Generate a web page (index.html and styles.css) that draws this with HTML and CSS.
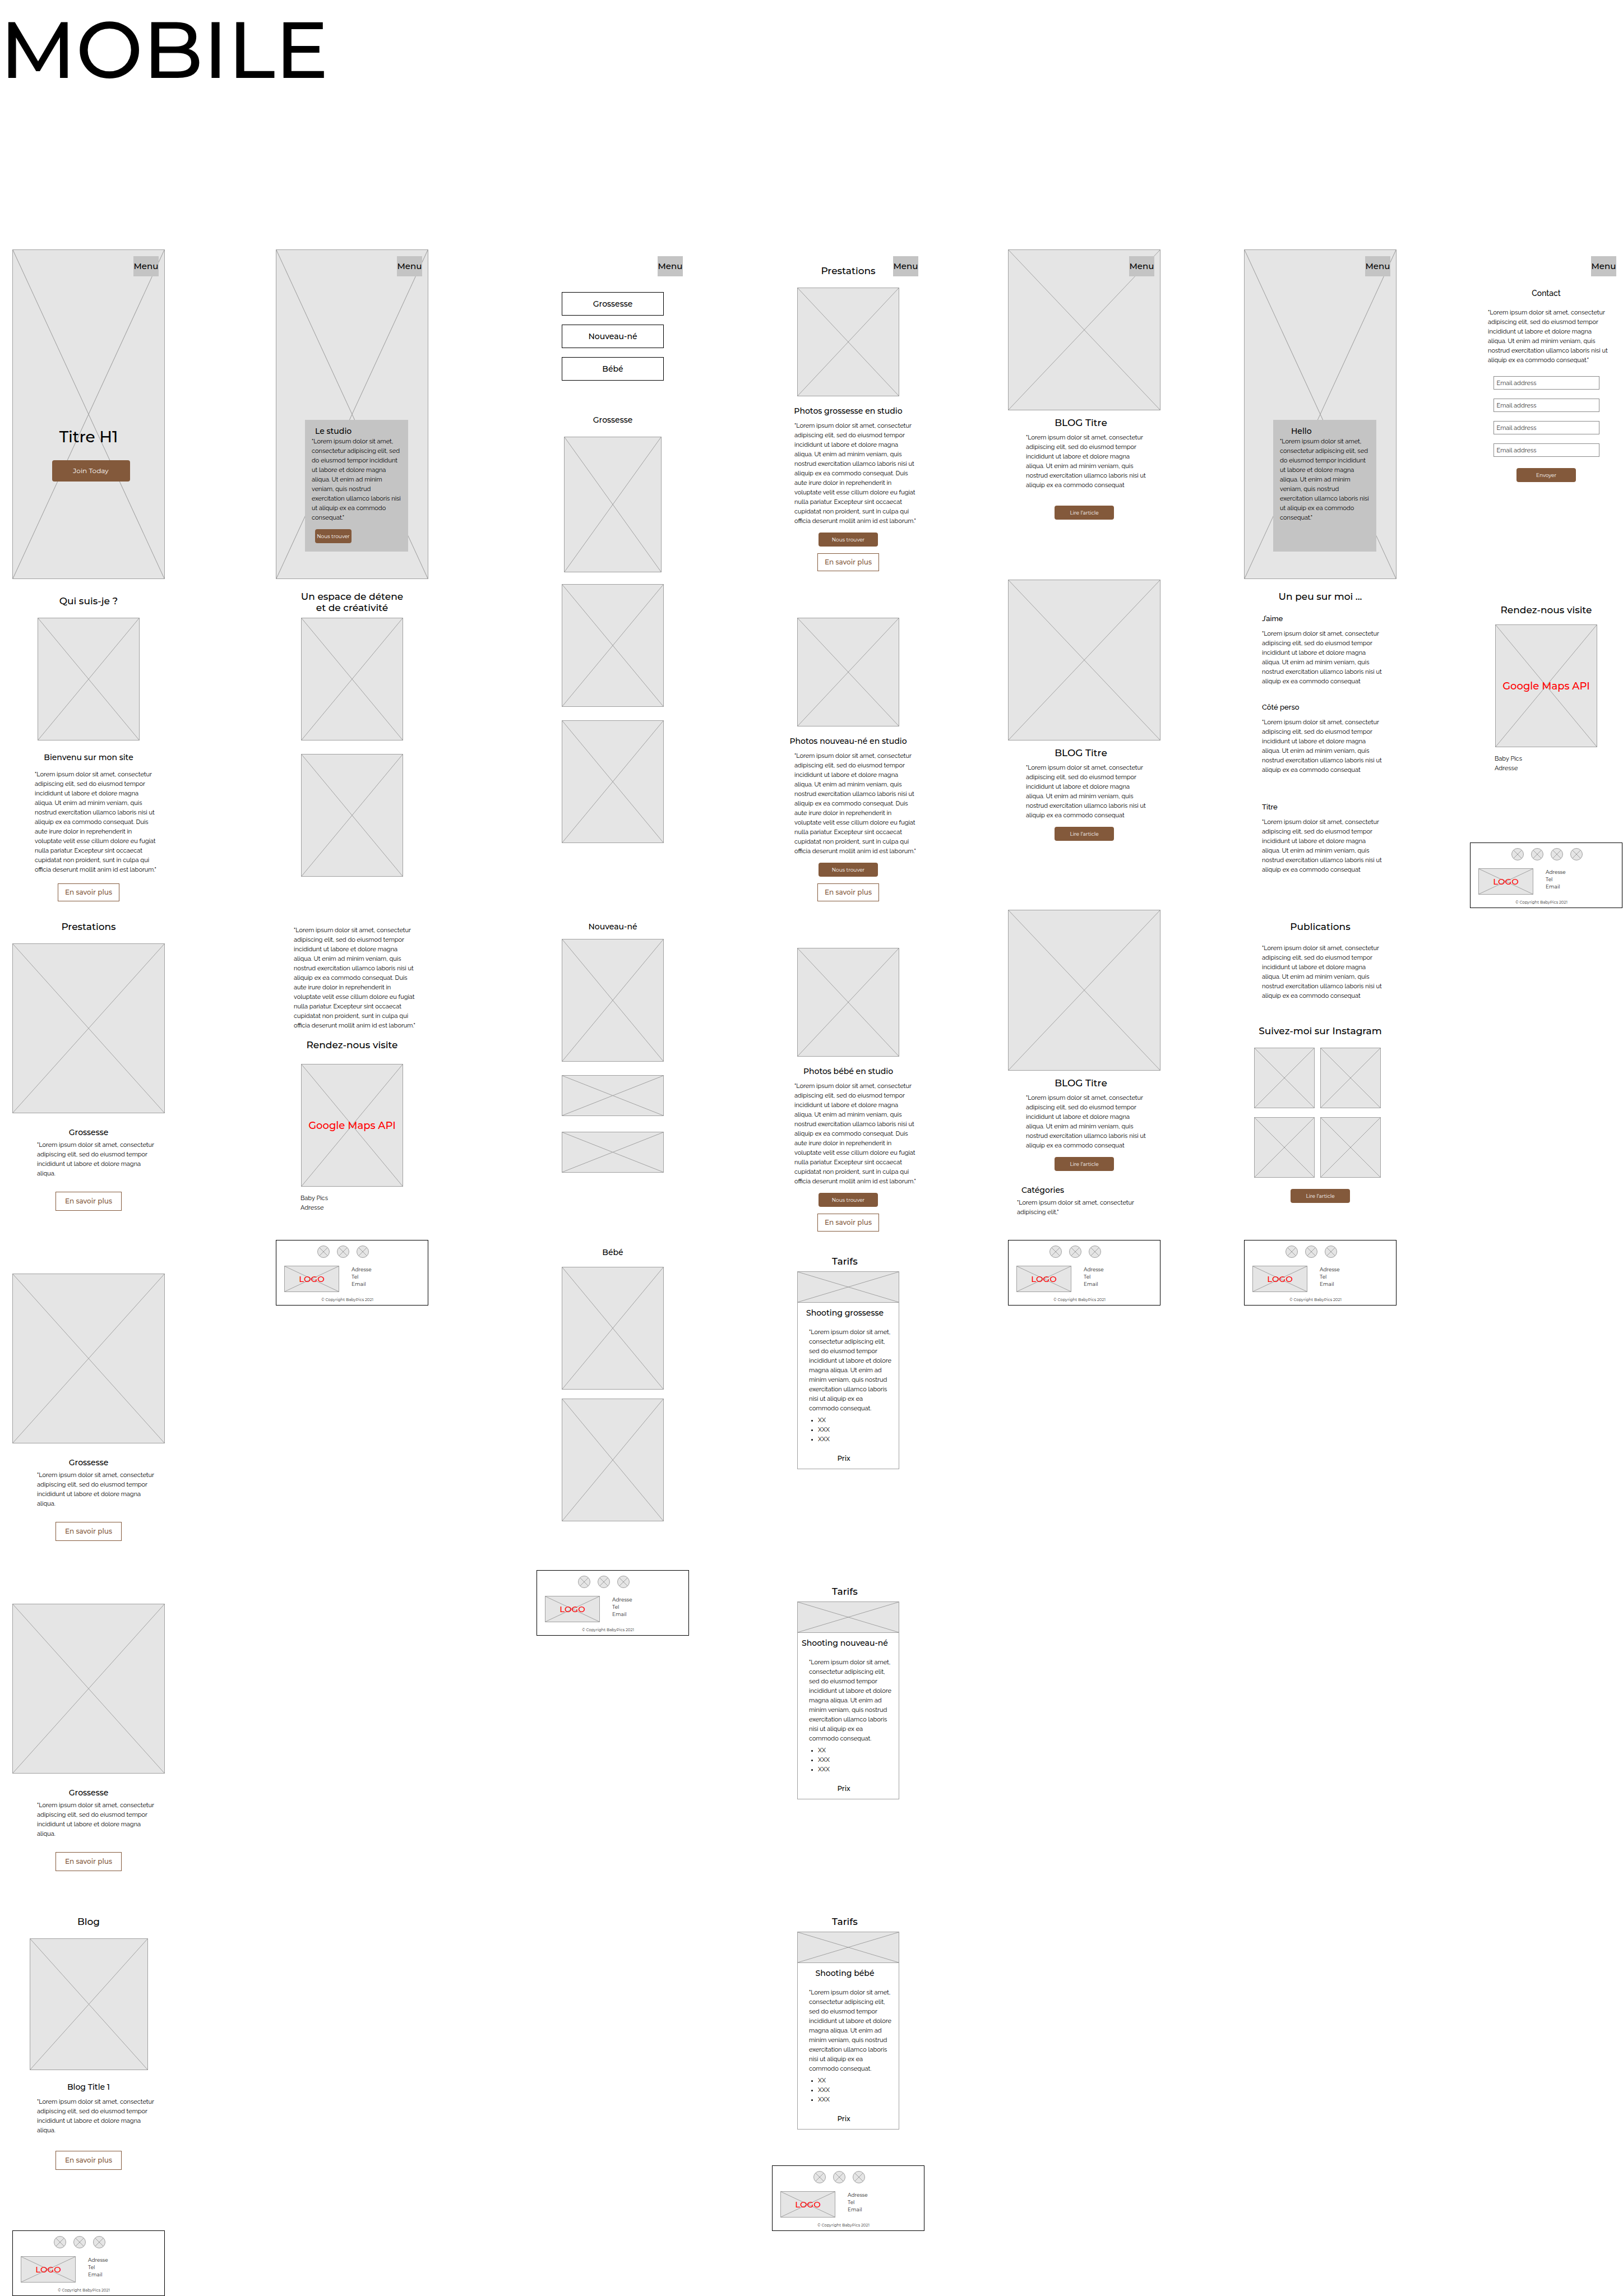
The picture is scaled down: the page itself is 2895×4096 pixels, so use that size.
FILE: index.html
```html
<!DOCTYPE html>
<html lang="fr">
<head>
<meta charset="utf-8">
<meta name="viewport" content="width=device-width, initial-scale=1">
<title>Baby Pics – Wireframes mobile</title>
<link rel="stylesheet" href="styles.css">
</head>
<body>
<svg width="0" height="0" class="defs" aria-hidden="true">
<symbol id="cross" viewBox="0 0 100 100" preserveAspectRatio="none"><path d="M0 0L100 100M100 0L0 100" vector-effect="non-scaling-stroke"/></symbol>
</svg>

<header class="board-header">
<h1 class="board-title">MOBILE</h1>
</header>

<main class="board">

<!-- Accueil -->
<article class="phone">
<button class="menu" type="button">Menu</button>
<section class="screen">
<div class="hero">
<svg class="ph"><use href="#cross"/></svg>
<div class="hero-body">
<h2 class="hero-title">Titre H1</h2>
<button class="btn btn-join mt-24" type="button">Join Today</button>
</div>
</div>
</section>
<section class="screen pt-28">
<h2>Qui suis-je ?</h2>
<svg class="ph ph-portrait mt-20"><use href="#cross"/></svg>
<h3 class="mt-20">Bienvenu sur mon site</h3>
<p class="text in-40 mt-12">"Lorem ipsum dolor sit amet, consectetur
adipiscing elit, sed do eiusmod tempor
incididunt ut labore et dolore magna
aliqua. Ut enim ad minim veniam, quis
nostrud exercitation ullamco laboris nisi ut
aliquip ex ea commodo consequat. Duis
aute irure dolor in reprehenderit in
voluptate velit esse cillum dolore eu fugiat
nulla pariatur. Excepteur sint occaecat
cupidatat non proident, sunt in culpa qui
officia deserunt mollit anim id est laborum."</p>
<button class="btn-line mt-16" type="button">En savoir plus</button>
</section>
<section class="screen pt-20">
<h2>Prestations</h2>
<svg class="ph ph-service mt-20"><use href="#cross"/></svg>
<h3 class="mt-24">Grossesse</h3>
<p class="text in-44 mt-4">"Lorem ipsum dolor sit amet, consectetur
adipiscing elit, sed do eiusmod tempor
incididunt ut labore et dolore magna
aliqua.</p>
<button class="btn-line btn-line-wide mt-24" type="button">En savoir plus</button>
</section>
<section class="screen pt-60">
<svg class="ph ph-service"><use href="#cross"/></svg>
<h3 class="mt-24">Grossesse</h3>
<p class="text in-44 mt-4">"Lorem ipsum dolor sit amet, consectetur
adipiscing elit, sed do eiusmod tempor
incididunt ut labore et dolore magna
aliqua.</p>
<button class="btn-line btn-line-wide mt-24" type="button">En savoir plus</button>
</section>
<section class="screen pt-60">
<svg class="ph ph-service"><use href="#cross"/></svg>
<h3 class="mt-24">Grossesse</h3>
<p class="text in-44 mt-4">"Lorem ipsum dolor sit amet, consectetur
adipiscing elit, sed do eiusmod tempor
incididunt ut labore et dolore magna
aliqua.</p>
<button class="btn-line btn-line-wide mt-24" type="button">En savoir plus</button>
</section>
<section class="screen pt-28">
<h2>Blog</h2>
<svg class="ph ph-blog mt-20"><use href="#cross"/></svg>
<h3 class="mt-20">Blog Title 1</h3>
<p class="text in-44 mt-8">"Lorem ipsum dolor sit amet, consectetur
adipiscing elit, sed do eiusmod tempor
incididunt ut labore et dolore magna
aliqua.</p>
<button class="btn-line btn-line-wide mt-28" type="button">En savoir plus</button>
</section>
<footer class="footer">
<div class="social"><svg class="ph"><use href="#cross"/></svg><svg class="ph"><use href="#cross"/></svg><svg class="ph"><use href="#cross"/></svg></div>
<div class="footer-row">
<div class="logo"><svg class="ph"><use href="#cross"/></svg><span>LOGO</span></div>
<address>Adresse<br>Tel<br>Email</address>
</div>
<small>© Copyright BabyPics 2021</small>
</footer>
</article>

<!-- Le studio -->
<article class="phone">
<button class="menu" type="button">Menu</button>
<section class="screen">
<div class="hero">
<svg class="ph"><use href="#cross"/></svg>
<div class="hero-card">
<h3 class="card-title">Le studio</h3>
<p class="text">"Lorem ipsum dolor sit amet,
consectetur adipiscing elit, sed
do eiusmod tempor incididunt
ut labore et dolore magna
aliqua. Ut enim ad minim
veniam, quis nostrud
exercitation ullamco laboris nisi
ut aliquip ex ea commodo
consequat."</p>
<button class="btn btn-compact mt-12" type="button">Nous trouver</button>
</div>
</div>
</section>
<section class="screen pt-20">
<h2>Un espace de détene<br>et de créativité</h2>
<svg class="ph ph-portrait mt-8"><use href="#cross"/></svg>
<svg class="ph ph-portrait mt-24"><use href="#cross"/></svg>
</section>
<section class="screen pt-28">
<p class="text in-32">"Lorem ipsum dolor sit amet, consectetur
adipiscing elit, sed do eiusmod tempor
incididunt ut labore et dolore magna
aliqua. Ut enim ad minim veniam, quis
nostrud exercitation ullamco laboris nisi ut
aliquip ex ea commodo consequat. Duis
aute irure dolor in reprehenderit in
voluptate velit esse cillum dolore eu fugiat
nulla pariatur. Excepteur sint occaecat
cupidatat non proident, sunt in culpa qui
officia deserunt mollit anim id est laborum."</p>
<h2 class="mt-16">Rendez-nous visite</h2>
<div class="map mt-24"><svg class="ph"><use href="#cross"/></svg><span>Google Maps API</span></div>
<p class="text in-44 mt-12">Baby Pics
Adresse</p>
</section>
<footer class="footer">
<div class="social"><svg class="ph"><use href="#cross"/></svg><svg class="ph"><use href="#cross"/></svg><svg class="ph"><use href="#cross"/></svg></div>
<div class="footer-row">
<div class="logo"><svg class="ph"><use href="#cross"/></svg><span>LOGO</span></div>
<address>Adresse<br>Tel<br>Email</address>
</div>
<small>© Copyright BabyPics 2021</small>
</footer>
</article>

<!-- Galerie -->
<article class="phone">
<button class="menu" type="button">Menu</button>
<section class="screen pt-76">
<nav class="filters">
<a href="#grossesse">Grossesse</a>
<a href="#nouveau-ne">Nouveau-né</a>
<a href="#bebe">Bébé</a>
</nav>
<h3 class="mt-60" id="grossesse">Grossesse</h3>
<svg class="ph ph-cover mt-20"><use href="#cross"/></svg>
</section>
<section class="screen pt-8">
<svg class="ph ph-portrait"><use href="#cross"/></svg>
<svg class="ph ph-portrait mt-24"><use href="#cross"/></svg>
</section>
<section class="screen pt-20">
<h3 id="nouveau-ne">Nouveau-né</h3>
<svg class="ph ph-portrait mt-12"><use href="#cross"/></svg>
<svg class="ph ph-strip mt-24"><use href="#cross"/></svg>
<svg class="ph ph-strip mt-28"><use href="#cross"/></svg>
</section>
<section class="screen pt-12">
<h3 id="bebe">Bébé</h3>
<svg class="ph ph-portrait mt-16"><use href="#cross"/></svg>
<svg class="ph ph-portrait mt-16"><use href="#cross"/></svg>
</section>
<footer class="footer">
<div class="social"><svg class="ph"><use href="#cross"/></svg><svg class="ph"><use href="#cross"/></svg><svg class="ph"><use href="#cross"/></svg></div>
<div class="footer-row">
<div class="logo"><svg class="ph"><use href="#cross"/></svg><span>LOGO</span></div>
<address>Adresse<br>Tel<br>Email</address>
</div>
<small>© Copyright BabyPics 2021</small>
</footer>
</article>

<!-- Prestations -->
<article class="phone">
<button class="menu" type="button">Menu</button>
<section class="screen pt-28">
<h2>Prestations</h2>
<svg class="ph ph-session mt-20"><use href="#cross"/></svg>
<h3 class="mt-16">Photos grossesse en studio</h3>
<p class="text in-40 mt-8">"Lorem ipsum dolor sit amet, consectetur
adipiscing elit, sed do eiusmod tempor
incididunt ut labore et dolore magna
aliqua. Ut enim ad minim veniam, quis
nostrud exercitation ullamco laboris nisi ut
aliquip ex ea commodo consequat. Duis
aute irure dolor in reprehenderit in
voluptate velit esse cillum dolore eu fugiat
nulla pariatur. Excepteur sint occaecat
cupidatat non proident, sunt in culpa qui
officia deserunt mollit anim id est laborum."</p>
<button class="btn mt-12" type="button">Nous trouver</button>
<button class="btn-line mt-12" type="button">En savoir plus</button>
</section>
<section class="screen pt-68">
<svg class="ph ph-session"><use href="#cross"/></svg>
<h3 class="mt-16">Photos nouveau-né en studio</h3>
<p class="text in-40 mt-8">"Lorem ipsum dolor sit amet, consectetur
adipiscing elit, sed do eiusmod tempor
incididunt ut labore et dolore magna
aliqua. Ut enim ad minim veniam, quis
nostrud exercitation ullamco laboris nisi ut
aliquip ex ea commodo consequat. Duis
aute irure dolor in reprehenderit in
voluptate velit esse cillum dolore eu fugiat
nulla pariatur. Excepteur sint occaecat
cupidatat non proident, sunt in culpa qui
officia deserunt mollit anim id est laborum."</p>
<button class="btn mt-12" type="button">Nous trouver</button>
<button class="btn-line mt-12" type="button">En savoir plus</button>
</section>
<section class="screen pt-68">
<svg class="ph ph-session"><use href="#cross"/></svg>
<h3 class="mt-16">Photos bébé en studio</h3>
<p class="text in-40 mt-8">"Lorem ipsum dolor sit amet, consectetur
adipiscing elit, sed do eiusmod tempor
incididunt ut labore et dolore magna
aliqua. Ut enim ad minim veniam, quis
nostrud exercitation ullamco laboris nisi ut
aliquip ex ea commodo consequat. Duis
aute irure dolor in reprehenderit in
voluptate velit esse cillum dolore eu fugiat
nulla pariatur. Excepteur sint occaecat
cupidatat non proident, sunt in culpa qui
officia deserunt mollit anim id est laborum."</p>
<button class="btn mt-12" type="button">Nous trouver</button>
<button class="btn-line mt-12" type="button">En savoir plus</button>
</section>
<section class="screen pt-28">
<h2 class="lean-left">Tarifs</h2>
<div class="price mt-8">
<svg class="ph"><use href="#cross"/></svg>
<h3 class="lean-left mt-8">Shooting grossesse</h3>
<p class="text mt-16">"Lorem ipsum dolor sit amet,
consectetur adipiscing elit,
sed do eiusmod tempor
incididunt ut labore et dolore
magna aliqua. Ut enim ad
minim veniam, quis nostrud
exercitation ullamco laboris
nisi ut aliquip ex ea
commodo consequat.</p>
<ul><li>XX</li><li>XXX</li><li>XXX</li></ul>
<strong class="mt-16">Prix</strong>
</div>
</section>
<section class="screen pt-28">
<h2 class="lean-left">Tarifs</h2>
<div class="price mt-8">
<svg class="ph"><use href="#cross"/></svg>
<h3 class="lean-left mt-8">Shooting nouveau-né</h3>
<p class="text mt-16">"Lorem ipsum dolor sit amet,
consectetur adipiscing elit,
sed do eiusmod tempor
incididunt ut labore et dolore
magna aliqua. Ut enim ad
minim veniam, quis nostrud
exercitation ullamco laboris
nisi ut aliquip ex ea
commodo consequat.</p>
<ul><li>XX</li><li>XXX</li><li>XXX</li></ul>
<strong class="mt-16">Prix</strong>
</div>
</section>
<section class="screen screen-short pt-28">
<h2 class="lean-left">Tarifs</h2>
<div class="price mt-8">
<svg class="ph"><use href="#cross"/></svg>
<h3 class="lean-left mt-8">Shooting bébé</h3>
<p class="text mt-16">"Lorem ipsum dolor sit amet,
consectetur adipiscing elit,
sed do eiusmod tempor
incididunt ut labore et dolore
magna aliqua. Ut enim ad
minim veniam, quis nostrud
exercitation ullamco laboris
nisi ut aliquip ex ea
commodo consequat.</p>
<ul><li>XX</li><li>XXX</li><li>XXX</li></ul>
<strong class="mt-16">Prix</strong>
</div>
</section>
<footer class="footer mt-64">
<div class="social"><svg class="ph"><use href="#cross"/></svg><svg class="ph"><use href="#cross"/></svg><svg class="ph"><use href="#cross"/></svg></div>
<div class="footer-row">
<div class="logo"><svg class="ph"><use href="#cross"/></svg><span>LOGO</span></div>
<address>Adresse<br>Tel<br>Email</address>
</div>
<small>© Copyright BabyPics 2021</small>
</footer>
</article>

<!-- Blog -->
<article class="phone">
<button class="menu" type="button">Menu</button>
<section class="screen">
<svg class="ph ph-post"><use href="#cross"/></svg>
<h2 class="lean-left mt-12">BLOG Titre</h2>
<p class="text in-32 mt-8">"Lorem ipsum dolor sit amet, consectetur
adipiscing elit, sed do eiusmod tempor
incididunt ut labore et dolore magna
aliqua. Ut enim ad minim veniam, quis
nostrud exercitation ullamco laboris nisi ut
aliquip ex ea commodo consequat</p>
<button class="btn mt-28" type="button">Lire l’article</button>
</section>
<section class="screen">
<svg class="ph ph-post"><use href="#cross"/></svg>
<h2 class="lean-left mt-12">BLOG Titre</h2>
<p class="text in-32 mt-8">"Lorem ipsum dolor sit amet, consectetur
adipiscing elit, sed do eiusmod tempor
incididunt ut labore et dolore magna
aliqua. Ut enim ad minim veniam, quis
nostrud exercitation ullamco laboris nisi ut
aliquip ex ea commodo consequat</p>
<button class="btn mt-12" type="button">Lire l’article</button>
</section>
<section class="screen">
<svg class="ph ph-post"><use href="#cross"/></svg>
<h2 class="lean-left mt-12">BLOG Titre</h2>
<p class="text in-32 mt-8">"Lorem ipsum dolor sit amet, consectetur
adipiscing elit, sed do eiusmod tempor
incididunt ut labore et dolore magna
aliqua. Ut enim ad minim veniam, quis
nostrud exercitation ullamco laboris nisi ut
aliquip ex ea commodo consequat</p>
<button class="btn mt-12" type="button">Lire l’article</button>
<h3 class="start in-24 mt-24">Catégories</h3>
<p class="text in-16 mt-4">"Lorem ipsum dolor sit amet, consectetur
adipiscing elit,"</p>
</section>
<footer class="footer">
<div class="social"><svg class="ph"><use href="#cross"/></svg><svg class="ph"><use href="#cross"/></svg><svg class="ph"><use href="#cross"/></svg></div>
<div class="footer-row">
<div class="logo"><svg class="ph"><use href="#cross"/></svg><span>LOGO</span></div>
<address>Adresse<br>Tel<br>Email</address>
</div>
<small>© Copyright BabyPics 2021</small>
</footer>
</article>

<!-- À propos -->
<article class="phone">
<button class="menu" type="button">Menu</button>
<section class="screen">
<div class="hero">
<svg class="ph"><use href="#cross"/></svg>
<div class="hero-card">
<h3 class="card-title card-title-inset">Hello</h3>
<p class="text">"Lorem ipsum dolor sit amet,
consectetur adipiscing elit, sed
do eiusmod tempor incididunt
ut labore et dolore magna
aliqua. Ut enim ad minim
veniam, quis nostrud
exercitation ullamco laboris nisi
ut aliquip ex ea commodo
consequat."</p>
</div>
</div>
</section>
<section class="screen pt-20">
<h2>Un peu sur moi ...</h2>
<h4 class="in-32 mt-20">J’aime</h4>
<p class="text in-32 mt-8">"Lorem ipsum dolor sit amet, consectetur
adipiscing elit, sed do eiusmod tempor
incididunt ut labore et dolore magna
aliqua. Ut enim ad minim veniam, quis
nostrud exercitation ullamco laboris nisi ut
aliquip ex ea commodo consequat</p>
<h4 class="in-32 mt-28">Côté perso</h4>
<p class="text in-32 mt-8">"Lorem ipsum dolor sit amet, consectetur
adipiscing elit, sed do eiusmod tempor
incididunt ut labore et dolore magna
aliqua. Ut enim ad minim veniam, quis
nostrud exercitation ullamco laboris nisi ut
aliquip ex ea commodo consequat</p>
<h4 class="in-32 mt-48">Titre</h4>
<p class="text in-32 mt-8">"Lorem ipsum dolor sit amet, consectetur
adipiscing elit, sed do eiusmod tempor
incididunt ut labore et dolore magna
aliqua. Ut enim ad minim veniam, quis
nostrud exercitation ullamco laboris nisi ut
aliquip ex ea commodo consequat</p>
</section>
<section class="screen pt-20">
<h2>Publications</h2>
<p class="text in-32 mt-20">"Lorem ipsum dolor sit amet, consectetur
adipiscing elit, sed do eiusmod tempor
incididunt ut labore et dolore magna
aliqua. Ut enim ad minim veniam, quis
nostrud exercitation ullamco laboris nisi ut
aliquip ex ea commodo consequat</p>
<h2 class="mt-44">Suivez-moi sur Instagram</h2>
<div class="insta mt-20"><svg class="ph"><use href="#cross"/></svg><svg class="ph"><use href="#cross"/></svg><svg class="ph"><use href="#cross"/></svg><svg class="ph"><use href="#cross"/></svg></div>
<button class="btn mt-20" type="button">Lire l’article</button>
</section>
<footer class="footer">
<div class="social"><svg class="ph"><use href="#cross"/></svg><svg class="ph"><use href="#cross"/></svg><svg class="ph"><use href="#cross"/></svg></div>
<div class="footer-row">
<div class="logo"><svg class="ph"><use href="#cross"/></svg><span>LOGO</span></div>
<address>Adresse<br>Tel<br>Email</address>
</div>
<small>© Copyright BabyPics 2021</small>
</footer>
</article>

<!-- Contact -->
<article class="phone">
<button class="menu" type="button">Menu</button>
<section class="screen pt-68">
<h3 class="light">Contact</h3>
<p class="text in-32 mt-16">"Lorem ipsum dolor sit amet, consectetur
adipiscing elit, sed do eiusmod tempor
incididunt ut labore et dolore magna
aliqua. Ut enim ad minim veniam, quis
nostrud exercitation ullamco laboris nisi ut
aliquip ex ea commodo consequat."</p>
<form class="form mt-20">
<input type="text" placeholder="Email address" aria-label="Email address">
<input type="text" placeholder="Email address" aria-label="Email address">
<input type="text" placeholder="Email address" aria-label="Email address">
<input type="text" placeholder="Email address" aria-label="Email address">
<button class="btn mt-4" type="button">Envoyer</button>
</form>
</section>
<section class="screen screen-short pt-44">
<h2>Rendez-nous visite</h2>
<div class="map mt-16"><svg class="ph"><use href="#cross"/></svg><span>Google Maps API</span></div>
<p class="text in-44 mt-12">Baby Pics
Adresse</p>
</section>
<footer class="footer mt-124">
<div class="social"><svg class="ph"><use href="#cross"/></svg><svg class="ph"><use href="#cross"/></svg><svg class="ph"><use href="#cross"/></svg><svg class="ph"><use href="#cross"/></svg></div>
<div class="footer-row">
<div class="logo"><svg class="ph"><use href="#cross"/></svg><span>LOGO</span></div>
<address>Adresse<br>Tel<br>Email</address>
</div>
<small>© Copyright BabyPics 2021</small>
</footer>
</article>

</main>
</body>
</html>
```
FILE: styles.css
```css
:root {
  --fill: #e5e5e5;
  --stroke: #a0a0a0;
  --panel: #c4c4c4;
  --brown: #83593b;
  --red: #ff0000;
  --heading: Montserrat, Inter, sans-serif;
  --copy: Raleway, Inter, sans-serif;
}

* { box-sizing: border-box; }

body {
  margin: 0;
  background: #fff;
  color: #000;
  font-family: var(--heading);
}

h1, h2, h3, h4, p, ul, form { margin: 0; padding: 0; }

.defs { position: absolute; }

/* Board */
.board-header { padding-bottom: 267px; }

.board-title {
  font-size: 142px;
  font-weight: 500;
  line-height: 178px;
}

.board {
  display: grid;
  grid-template-columns: 470fr 465fr 420fr 421fr 421fr 403fr 273fr;
  align-items: start;
  padding-left: 22px;
}

.phone {
  position: relative;
  display: flex;
  flex-direction: column;
  width: 272px;
}

.screen {
  display: flex;
  flex-direction: column;
  align-items: center;
  min-height: 589px;
}

.screen-short { min-height: 0; }

/* Spacing */
.pt-8 { padding-top: 8px; }
.pt-12 { padding-top: 12px; }
.pt-20 { padding-top: 20px; }
.pt-28 { padding-top: 28px; }
.pt-44 { padding-top: 44px; }
.pt-60 { padding-top: 60px; }
.pt-68 { padding-top: 68px; }
.pt-76 { padding-top: 76px; }

.mt-4 { margin-top: 4px; }
.mt-8 { margin-top: 8px; }
.mt-12 { margin-top: 12px; }
.mt-16 { margin-top: 16px; }
.mt-20 { margin-top: 20px; }
.mt-24 { margin-top: 24px; }
.mt-28 { margin-top: 28px; }
.mt-44 { margin-top: 44px; }
.mt-48 { margin-top: 48px; }
.mt-60 { margin-top: 60px; }
.mt-64 { margin-top: 64px; }
.mt-124 { margin-top: 124px; }

.in-16 { margin-left: 16px; }
.in-24 { margin-left: 24px; }
.in-32 { margin-left: 32px; }
.in-40 { margin-left: 40px; }
.in-44 { margin-left: 44px; }

/* Type */
h2, h3 {
  font-weight: 500;
  line-height: 20px;
  text-align: center;
  white-space: nowrap;
}

h2 { font-size: 17px; }
h3 { font-size: 14px; }

h4 {
  align-self: flex-start;
  font: 500 13px/20px var(--copy);
}

.light { font-family: var(--copy); }
.start { align-self: flex-start; }
.lean-left { padding-right: 12px; }

.text {
  align-self: flex-start;
  font: 400 11px/17px var(--copy);
  white-space: pre;
}

/* Image placeholders */
.ph {
  display: block;
  flex: none;
  width: 100%;
  height: 100%;
  border: 1px solid var(--stroke);
  background: var(--fill);
  fill: none;
  stroke: var(--stroke);
}

.ph-portrait { width: 182px; height: 219px; }
.ph-cover { width: 174px; height: 242px; }
.ph-strip { width: 182px; height: 73px; }
.ph-session { width: 182px; height: 194px; }
.ph-blog { width: 211px; height: 235px; }
.ph-service { height: 303px; }
.ph-post { height: 287px; }

/* Buttons */
button { cursor: pointer; }

.menu {
  position: absolute;
  top: 12px;
  right: 11px;
  z-index: 1;
  width: 45px;
  height: 36px;
  padding: 0;
  border: 0;
  background: var(--panel);
  color: #000;
  font: 500 15px/20px var(--heading);
}

.btn {
  width: 106px;
  height: 25px;
  padding: 0;
  border: 0;
  border-radius: 4px;
  background: var(--brown);
  color: #fff;
  font: 400 9px/12px var(--heading);
}

.btn-join {
  width: 139px;
  height: 38px;
  margin-left: 8px;
  font-size: 12px;
  line-height: 16px;
}

.btn-compact {
  width: 65px;
  margin-left: 6px;
}

.btn-line {
  width: 110px;
  height: 32px;
  padding: 0;
  border: 1px solid var(--brown);
  background: #fff;
  color: var(--brown);
  font: 500 12px/16px var(--heading);
}

.btn-line-wide { width: 118px; height: 34px; }

/* Hero */
.hero {
  display: grid;
  width: 100%;
  height: 588px;
}

.hero > * { grid-area: 1 / 1; }

.hero-body {
  display: flex;
  flex-direction: column;
  align-items: center;
  padding-top: 316px;
}

.hero-title { font-size: 28px; line-height: 36px; }

.hero-card {
  width: 184px;
  height: 235px;
  margin: 304px 0 0 52px;
  padding: 10px 12px;
  background: var(--panel);
}

.card-title { padding-left: 6px; text-align: left; }
.card-title-inset { padding-left: 20px; }

/* Gallery filters */
.filters {
  display: grid;
  gap: 16px;
  width: 182px;
}

.filters a {
  height: 42px;
  border: 1px solid #000;
  color: #000;
  font-size: 14px;
  font-weight: 500;
  line-height: 40px;
  text-align: center;
  text-decoration: none;
}

/* Stacked label over a placeholder */
.map, .logo {
  display: grid;
  place-items: center;
  color: var(--red);
  font-weight: 500;
}

.map > *, .logo > * { grid-area: 1 / 1; }

.map {
  width: 182px;
  height: 219px;
  font-size: 18px;
}

.logo {
  width: 98px;
  height: 47px;
  font-size: 15px;
}

/* Price card */
.price {
  display: flex;
  flex-direction: column;
  width: 182px;
  padding-bottom: 8px;
  border: 1px solid var(--stroke);
  border-top: 0;
}

.price .ph {
  align-self: center;
  width: 182px;
  height: 56px;
}

.price .text, .price ul { margin-left: 20px; }

.price ul {
  margin-top: 4px;
  padding-left: 16px;
  font: 400 11px/17px var(--copy);
}

.price li::marker { font-size: 8px; }

.price strong {
  padding-right: 16px;
  font-size: 12px;
  font-weight: 500;
  line-height: 20px;
  text-align: center;
}

/* Instagram grid */
.insta {
  display: grid;
  grid-template-columns: 108px 108px;
  grid-auto-rows: 108px;
  gap: 16px 10px;
  padding-right: 10px;
}

/* Form */
.form {
  display: flex;
  flex-direction: column;
  align-items: center;
  gap: 16px;
}

.form input {
  width: 189px;
  height: 24px;
  padding: 0 5px;
  border: 1px solid #8a8a8a;
  background: #fff;
  font: 400 11px/16px var(--copy);
}

.form input::placeholder { color: #333; opacity: 1; }

/* Footer */
.footer {
  display: flex;
  flex-direction: column;
  height: 117px;
  padding: 9px 14px 0;
  border: 1px solid #000;
}

.social {
  display: flex;
  gap: 13px;
  padding-left: 59px;
}

.social .ph {
  width: 22px;
  height: 22px;
  border-radius: 50%;
}

.footer-row {
  display: flex;
  gap: 22px;
  margin-top: 14px;
}

.footer address {
  color: #222;
  font: 400 9px/13px var(--heading);
}

.footer small {
  margin-top: 8px;
  padding-left: 66px;
  color: #333;
  font-size: 7px;
  line-height: 12px;
}
```
